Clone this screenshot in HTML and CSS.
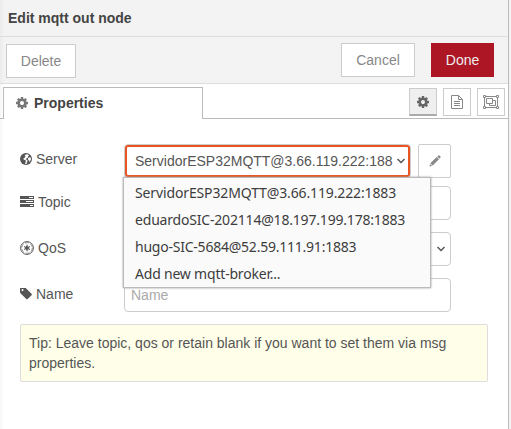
FILE: index.html
```
<!DOCTYPE html>
<html lang="en">
<head>
<meta charset="utf-8">
<title>Edit mqtt out node</title>
<link rel="stylesheet" href="styles.css">
</head>
<body>
<svg class="defs" width="0" height="0">
  <symbol id="cog" viewBox="128 128 1536 1536"><path d="M1152 896q0-106-75-181t-181-75-181 75-75 181 75 181 181 75 181-75 75-181zm512-109v222q0 12-8 23t-20 13l-185 28q-19 54-39 91 35 50 107 138 10 12 10 25t-9 23q-27 37-99 108t-94 71q-12 0-26-9l-138-108q-44 23-91 38-16 136-29 186-7 28-36 28h-222q-14 0-24.5-8.5t-11.5-21.5l-28-184q-49-16-90-37l-141 107q-10 9-25 9-14 0-25-11-126-114-165-168-7-10-7-23 0-12 8-23 15-21 51-66.5t54-70.5q-27-50-41-99l-183-27q-13-2-21-12.5t-8-23.5v-222q0-12 8-23t19-13l186-28q14-46 39-92-40-57-107-138-10-12-10-24 0-10 9-23 26-36 98.5-107.5t94.5-71.5q13 0 26 10l138 107q44-23 91-38 16-136 29-186 7-28 36-28h222q14 0 24.5 8.5t11.5 21.5l28 184q49 16 90 37l142-107q9-9 24-9 13 0 25 10 129 119 165 170 7 8 7 22 0 12-8 23-15 21-51 66.5t-54 70.5q26 50 41 98l183 28q13 2 21 12.5t8 23.5z"/></symbol>
</svg>
<div class="tray">
  <header class="title">Edit mqtt out node</header>
  <div class="toolbar">
    <button class="btn delete">Delete</button>
    <button class="btn cancel">Cancel</button>
    <button class="btn primary">Done</button>
  </div>
  <nav class="tabs">
    <div class="tab"><svg width="12" height="12"><use href="#cog"/></svg>Properties</div>
    <div class="tab-buttons">
      <button class="mini selected"><svg width="12" height="12"><use href="#cog"/></svg></button>
      <button class="mini"><svg width="12" height="14" viewBox="0 0 12 14" fill="none" stroke="currentColor"><path d="M.5.5h7l4 4v9H.5zM7.500.5v4h4M3 6.500h6M3 8.500h6M3 10.500h6"/></svg></button>
      <button class="mini"><svg width="16" height="14" viewBox="0 0 16 14" fill="none" stroke="currentColor"><path d="M2.500 1.500h11M2.500 12.500h11M1.500 2.500v9M14.500 2.500v9M.5.5h2v2h-2zM13.500.5h2v2h-2zM.5 11.500h2v2h-2zM13.500 11.500h2v2h-2zM3.500 3.500h6v5h-6zM9.500 5.500h3v5h-6v-2"/></svg></button>
    </div>
  </nav>
  <form class="form">
    <div class="row server">
      <label><svg width="12" height="12" viewBox="0 0 12 12"><circle cx="6" cy="6" r="6" fill="currentColor"/><path fill="#fff" d="M6.800 1.200L8.200 1.500 9 2.800 7.900 3.400 8.200 4.400 6.700 5.300 5.700 6.300 7.200 7.100 7.600 8.300 6.600 9.800 6.800 10.900 4.900 10.700 5.600 9.100 6.100 7.700 5 6.900 3.600 6.500 3.400 5.500 4.900 4.600 5.400 3.300 4.700 2.600 5.300 1.700zM9.400 4.200L10.700 4.600 11 6.200 9.600 9.200 9.200 7.500 8.200 7 8 5.500z"/></svg>Server</label>
      <div class="control active"><span class="value">ServidorESP32MQTT@3.66.119.222:1883</span><svg class="chevron" width="8" height="6" viewBox="0 0 8 6"><path d="M.5 1L4 4.500 7.500 1"/></svg>
        <ul class="popup">
          <li class="o1">ServidorESP32MQTT@3.66.119.222:1883</li>
          <li class="o2">eduardoSIC-202114@18.197.199.178:1883</li>
          <li class="o3">hugo-SIC-5684@52.59.111.91:1883</li>
          <li class="o4">Add new mqtt-broker...</li>
        </ul>
      </div>
      <button type="button" class="edit"><svg width="12" height="12" viewBox="0 0 12 12"><path fill="currentColor" d="M8.300 1.400L9.300.5q.6-.4 1.100 0l1 1q.5.6 0 1.200l-1 1zM7.700 2L10 4.300 3.700 10.600 1.300 8.300zM1 8.900l2.200 2.200L.5 11.600z"/></svg></button>
    </div>
    <div class="row">
      <label><svg width="14" height="12" viewBox="0 0 14 12"><path fill="currentColor" fill-rule="evenodd" d="M0 0h14v3H0zM9 1v1h4V1zM0 4h14v3H0zM6 5v1h7V5zM0 8h14v3H0zM10 9v1h3V9z"/></svg>Topic</label>
      <div class="control"></div>
    </div>
    <div class="row">
      <label><svg width="14" height="14" viewBox="0 0 14 14" fill="none" stroke="currentColor"><circle cx="7" cy="7" r="6.400" stroke-width="1"/><circle cx="7" cy="7" r="5.300" stroke-width=".6" stroke-dasharray="3.900 1.650"/><path stroke-width="1.200" d="M7 3.800v6.400M4.200 5.400l5.600 3.200M9.800 5.400l-5.600 3.200"/><circle cx="7" cy="7" r="1.200" fill="currentColor"/></svg>QoS</label>
      <div class="control qos"><svg class="chevron" width="8" height="6" viewBox="0 0 8 6"><path d="M.5 1L4 4.500 7.500 1"/></svg></div>
    </div>
    <div class="row">
      <label><svg width="12" height="12" viewBox="128 192 1536 1536"><path fill="currentColor" d="M576 448q0-53-37.500-90.500t-90.500-37.500-90.500 37.500-37.500 90.500 37.500 90.500 90.500 37.500 90.500-37.500 37.500-90.500zm1067 576q0 53-37 90l-491 492q-39 37-91 37-53 0-90-37l-715-716q-38-37-64.500-101t-26.500-117v-416q0-52 38-90t90-38h416q53 0 117 26.500t102 64.500l715 714q37 39 37 91z"/></svg>Name</label>
      <div class="control placeholder">Name</div>
    </div>
    <div class="tip">Tip: Leave topic, qos or retain blank if you want to set them via msg properties.</div>
  </form>
</div>
</body>
</html>
```
FILE: styles.css
```
* { box-sizing: border-box; }
body {
  margin: 0;
  height: 429px;
  overflow: hidden;
  background: #f3f3f3;
  font: 14px/20px "Liberation Sans", Arial, sans-serif;
  color: #555;
}
svg { display: block; flex: none; }
.defs { position: absolute; }
use { fill: currentColor; }
.tray {
  width: 509px;
  height: 429px;
  border-right: 1px solid #bbb;
  background: linear-gradient(to right, #f6f6f6, #fff 4px);
}
.title {
  height: 37px;
  padding: 8px;
  border-bottom: 1px solid #ddd;
  background: linear-gradient(to right, #ebebeb, #f3f3f3 4px);
  color: #444;
  font-weight: bold;
}
.toolbar {
  display: flex;
  height: 47px;
  padding: 6px 14px 0 6px;
  border-bottom: 1px solid #ddd;
  background: linear-gradient(to right, #ebebeb, #f3f3f3 4px);
}
button {
  display: flex;
  align-items: center;
  justify-content: center;
  margin: 0;
  padding: 0;
  border: 1px solid #ccc;
  border-radius: 0;
  background: #fff;
  color: #888;
  font: inherit;
}
.btn { height: 34px; }
.delete { width: 70px; margin: 1px auto 0 0; }
.cancel { width: 74px; margin-right: 16px; }
.primary { width: 63px; border-color: #ad1625; background: #ad1625; color: #eee; }
.tabs {
  display: flex;
  justify-content: space-between;
  height: 35px;
  padding: 3px 3px 0;
  background: linear-gradient(#bbb, #bbb) bottom / 100% 1px no-repeat;
}
.tab {
  display: flex;
  align-items: center;
  gap: 6px;
  width: 200px;
  height: 32px;
  padding: 0 12px 2px;
  border: 1px solid #bbb;
  border-bottom: 0;
  background: #fff;
  color: #444;
  font-weight: bold;
}
.tab svg { color: #777; }
.tab-buttons { display: flex; gap: 6px; padding-top: 1px; }
.mini { width: 28px; height: 28px; }
.mini.selected { border-bottom: 2px solid #aaa; background: #efefef; color: #666; }
.form { padding: 25px 20px 0; }
.row { display: flex; height: 34px; margin-bottom: 12px; }
.row.server { margin-bottom: 8px; }
.row label {
  display: flex;
  align-items: center;
  gap: 4px;
  width: 104px;
  height: 32px;
}
.server label { height: 30px; }
.control {
  position: relative;
  display: flex;
  align-items: center;
  width: 327px;
  height: 34px;
  padding: 0 6px;
  border: 1px solid #ccc;
  border-radius: 4px;
  background: #fff;
}
.placeholder { color: #aaa; }
.control.qos { padding-right: 5px; }
.control.active {
  width: 287px;
  margin-right: 7px;
  padding: 0 5px 0 10px;
}
.control.active::before {
  content: "";
  position: absolute;
  inset: 0;
  border: 2px solid #e95420;
  border-radius: 3px;
}
.value { width: 258px; overflow: hidden; white-space: nowrap; }
.chevron {
  margin-left: auto;
  fill: none;
  stroke: #555;
  stroke-width: 1.5;
}
.edit { width: 33px; height: 34px; border-radius: 2px; }
.popup {
  position: absolute;
  z-index: 1;
  top: 32px;
  left: -2px;
  width: 308px;
  height: 111px;
  margin: 0;
  padding: 1px 11px;
  border: 1px solid #bbb;
  background: #fafafa;
  box-shadow: 0 0 2px #999;
  list-style: none;
  color: #3d3d3d;
  font: 14px/27px "Noto Sans", sans-serif;
  white-space: nowrap;
}
.popup li { height: 27px; }
.o1 { letter-spacing: -.13px; }
.o2 { letter-spacing: -.19px; }
.o3 { letter-spacing: -.23px; }
.o4 { letter-spacing: -.2px; }
.tip {
  width: 468px;
  height: 58px;
  padding: 8px;
  border: 1px solid #ddd;
  border-radius: 2px;
  background: #ffffe9;
}
```
